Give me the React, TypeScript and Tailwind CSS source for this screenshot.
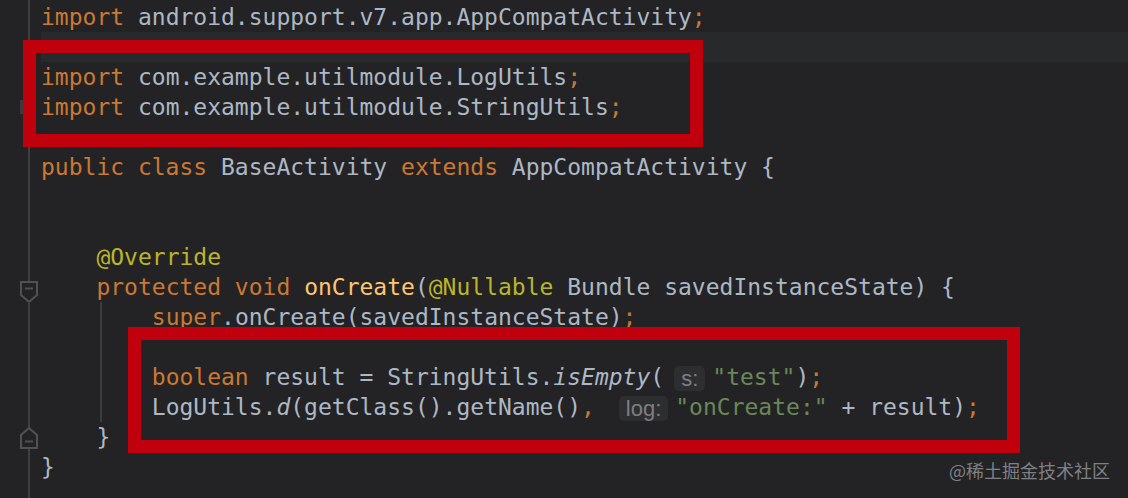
import React from "react"

type Seg = { t: string; c?: string; i?: boolean; hint?: string }

const KW = "text-[#cc7832]"
const PL = "text-[#adb8c5]"
const ANN = "text-[#bbb529]"
const FN = "text-[#ffc66d]"
const STR = "text-[#6a8759]"

type Fold = "open" | "close" | "end" | null

interface Line { segs: Seg[]; fold?: Fold; guide?: boolean; current?: boolean }

const lines: Line[] = [
  { segs: [{ t: "import", c: KW }, { t: " android.support.annotation.Nullable", c: PL }, { t: ";", c: KW }] },
  { segs: [{ t: "import", c: KW }, { t: " android.support.v7.app.AppCompatActivity", c: PL }, { t: ";", c: KW }] },
  { segs: [], current: true },
  { segs: [{ t: "import", c: KW }, { t: " com.example.utilmodule.LogUtils", c: PL }, { t: ";", c: KW }] },
  { segs: [{ t: "import", c: KW }, { t: " com.example.utilmodule.StringUtils", c: PL }, { t: ";", c: KW }], fold: "end" },
  { segs: [] },
  { segs: [{ t: "public class", c: KW }, { t: " BaseActivity ", c: PL }, { t: "extends", c: KW }, { t: " AppCompatActivity {", c: PL }] },
  { segs: [] },
  { segs: [] },
  { segs: [{ t: "    " }, { t: "@Override", c: ANN }] },
  {
    segs: [
      { t: "    " }, { t: "protected void", c: KW }, { t: " " }, { t: "onCreate", c: FN }, { t: "(", c: PL },
      { t: "@Nullable", c: ANN }, { t: " Bundle savedInstanceState) {", c: PL },
    ],
    fold: "open",
  },
  { segs: [{ t: "        " }, { t: "super", c: KW }, { t: ".onCreate(savedInstanceState)", c: PL }, { t: ";", c: KW }], guide: true },
  { segs: [], guide: true },
  {
    segs: [
      { t: "        " }, { t: "boolean", c: KW }, { t: " result = StringUtils.", c: PL }, { t: "isEmpty", c: PL, i: true },
      { t: "(", c: PL }, { t: "", hint: "s:" }, { t: "\"test\"", c: STR }, { t: ")", c: PL }, { t: ";", c: KW },
    ],
    guide: true,
  },
  {
    segs: [
      { t: "        " }, { t: "LogUtils.", c: PL }, { t: "d", c: PL, i: true }, { t: "(getClass().getName()", c: PL },
      { t: ",", c: KW }, { t: " " }, { t: "", hint: "log:" }, { t: "\"onCreate:\"", c: STR }, { t: " + result)", c: PL },
      { t: ";", c: KW },
    ],
    guide: true,
  },
  { segs: [{ t: "    " }, { t: "}", c: PL }], fold: "close" },
  { segs: [{ t: "}", c: PL }] },
  { segs: [] },
]

function Gutter({ fold }: { fold?: Fold }) {
  const line = "#3e3f41"
  const icon = "#505153"
  return (
    <svg width="41" height="30" className="shrink-0">
      {fold === "open" ? (
        <>
          <path d="M29 0V10" stroke={line} strokeWidth="2" />
          <path d="M21 10H37V23L29 30L21 23Z" fill="#232325" stroke={icon} strokeWidth="2" />
          <path d="M25 16.5H33" stroke={icon} strokeWidth="2" />
        </>
      ) : fold === "close" ? (
        <>
          <path d="M29 0V6M29 26V30" stroke={line} strokeWidth="2" />
          <path d="M29 6L37 13V26H21V13Z" fill="#232325" stroke={icon} strokeWidth="2" />
          <path d="M25 19.5H33" stroke={icon} strokeWidth="2" />
        </>
      ) : (
        <>
          <path d="M29 0V30" stroke={line} strokeWidth="2" />
          {fold === "end" && <rect x="20" y="8" width="4" height="14" fill="#3a3b3d" />}
        </>
      )}
    </svg>
  )
}

function Hint({ label }: { label: string }) {
  return (
    <span className="inline-flex items-center h-[25px] px-[7px] ml-[10px] mr-[7px] rounded-[5px] bg-[#2d2e30] text-[#7d7f83] text-[22px] align-middle font-['Liberation_Sans',sans-serif]">
      {label}
    </span>
  )
}

export default function App() {
  return (
    <div className="relative w-[1128px] h-[498px] overflow-hidden bg-[#232325]">
      <div className="flex flex-col -mt-[28px] font-['DejaVu_Sans_Mono',monospace] text-[23px] leading-[30px]">
        {lines.map((ln, idx) => (
          <div key={idx} className="flex h-[30px]">
            <Gutter fold={ln.fold} />
            <div className={`relative flex-1 whitespace-pre ${ln.current ? "bg-[#28292b]" : ""}`}>
              {ln.guide && <div className="absolute left-[59px] top-0 bottom-0 w-[2px] bg-[#3a3b3d]" />}
              {ln.segs.map((s, j) =>
                s.hint ? (
                  <Hint key={j} label={s.hint} />
                ) : (
                  <span key={j} className={`${s.c ?? PL} ${s.i ? "italic" : ""}`}>{s.t}</span>
                )
              )}
            </div>
          </div>
        ))}
      </div>

      {/* annotation boxes */}
      <div className="absolute left-[23px] top-[40px] w-[680px] h-[107px] border-[13px] border-[#c1000d]" />
      <div className="absolute left-[128px] top-[327px] w-[892px] h-[126px] border-[13px] border-[#c1000d]" />

      <div className="absolute right-[18px] top-[457px] text-[18px] leading-[26px] text-[#7f8083] font-['Noto_Sans_CJK_SC',sans-serif]">
        @稀土掘金技术社区
      </div>
    </div>
  )
}
